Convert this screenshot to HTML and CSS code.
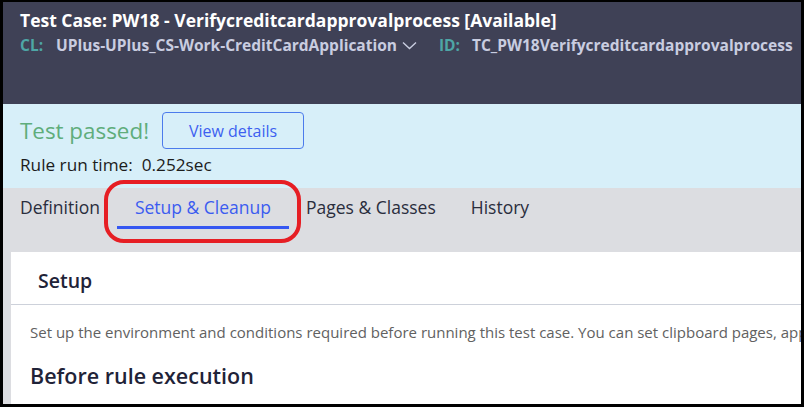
FILE: index.html
```html
<!DOCTYPE html>
<html lang="en">
<head>
<meta charset="utf-8">
<title>Test Case: PW18</title>
<link rel="stylesheet" href="styles.css">
</head>
<body>
<div class="frame">
  <header class="header">
    <h1 class="title">Test Case: PW18 - Verifycreditcardapprovalprocess [Available]</h1>
    <div class="meta">
      <span class="label">CL:</span>
      <span class="value">UPlus-UPlus_CS-Work-CreditCardApplication</span>
      <svg class="chev" width="15" height="9" viewBox="0 0 15 9"><path d="M1 1.5 L7.5 7.5 L14 1.5" fill="none" stroke="#c9cde0" stroke-width="1.4"/></svg>
      <span class="label id-label">ID:</span>
      <span class="value">TC_PW18Verifycreditcardapprovalprocess</span>
    </div>
  </header>
  <section class="result">
    <div class="result-row">
      <span class="passed">Test passed!</span>
      <button class="details-btn">View details</button>
    </div>
    <div class="runtime"><span>Rule run time:</span><span class="rt-val">0.252sec</span></div>
  </section>
  <nav class="tabs">
    <span class="tab">Definition</span>
    <span class="tab active">Setup &amp; Cleanup<span class="ring"></span></span>
    <span class="tab">Pages &amp; Classes</span>
    <span class="tab">History</span>
  </nav>
  <main class="card">
    <h2 class="card-title">Setup</h2>
    <p class="desc">Set up the environment and conditions required before running this test case. You can set clipboard pages, apply data transforms, load data pages, execute activities, create and load objects.</p>
    <h3 class="sub">Before rule execution</h3>
  </main>
</div>
</body>
</html>
```
FILE: styles.css
```css
html, body { margin: 0; padding: 0; }
body {
  background: #000;
  width: 804px;
  height: 407px;
  overflow: hidden;
  font-family: "Open Sans", "Noto Sans", sans-serif;
}
.frame {
  border-style: solid;
  border-color: #000;
  border-width: 2px 3px 3px 3px;
  height: 402px;
  background: #dcdde1;
  display: flex;
  flex-direction: column;
  overflow: hidden;
}
.header {
  background: #3f4156;
  height: 102px;
  padding: 6px 0 0 17px;
  box-sizing: border-box;
  flex: none;
}
.title {
  margin: 0;
  color: #fff;
  font-size: 17.5px;
  font-weight: 700;
  line-height: 24px;
  white-space: nowrap;
}
.meta {
  display: flex;
  align-items: center;
  margin-top: 2px;
  font-size: 15.5px;
  font-weight: 700;
  line-height: 22px;
  white-space: nowrap;
}
.label { color: #4ea6a6; margin-right: 13px; }
.value { color: #c9cde0; }
.chev { margin: 0 0 0 5px; }
.id-label { margin-left: 22px; margin-right: 12px; }
.result {
  background: #d7eff9;
  height: 84px;
  padding: 8px 0 0 17px;
  box-sizing: border-box;
  flex: none;
}
.result-row { display: flex; align-items: center; }
.passed {
  color: #5fad7c;
  font-size: 22.4px;
  line-height: 30px;
  margin-right: 13px;
}
.details-btn {
  width: 142px;
  height: 37px;
  border: 1px solid #4c7bec;
  border-radius: 4px;
  background: transparent;
  color: #3d5ff0;
  font-family: inherit;
  font-size: 16px;
}
.runtime {
  margin-top: 5px;
  font-size: 17.2px;
  color: #1c1c1c;
  line-height: 22px;
}
.rt-val { margin-left: 9px; }
.tabs {
  height: 64px;
  display: flex;
  align-items: flex-start;
  padding: 5px 0 0 17px;
  box-sizing: border-box;
  flex: none;
}
.tab {
  position: relative;
  font-size: 17.5px;
  color: #2a2d3d;
  line-height: 28px;
  padding: 0 17.5px 5px;
  border-bottom: 3px solid transparent;
}
.tab:first-child { padding-left: 0; }
.tab.active {
  color: #3b5cf0;
  border-bottom-color: #3557f2;
}
.ring {
  position: absolute;
  left: -13px;
  right: -12px;
  top: -13px;
  bottom: -17px;
  border: 4px solid #e61e24;
  border-radius: 20px;
}
.card {
  background: #fff;
  margin-left: 8px;
  flex: 1;
  overflow: hidden;
}
.card-title {
  margin: 0;
  font-size: 19.5px;
  font-weight: 600;
  color: #1f2338;
  line-height: 26px;
  padding: 16px 0 10px 27px;
  border-bottom: 1px solid #cdd1da;
}
.desc {
  margin: 17px 0 0 19px;
  font-size: 15px;
  color: #616161;
  white-space: nowrap;
  line-height: 20px;
}
.sub {
  margin: 20px 0 0 19px;
  font-size: 21.5px;
  font-weight: 600;
  color: #1f2338;
  line-height: 28px;
}
```
